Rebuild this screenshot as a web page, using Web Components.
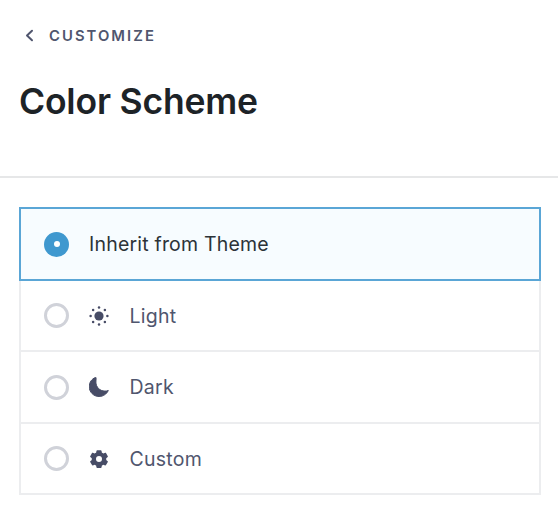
<!DOCTYPE html>
<html lang="en">
<head>
<meta charset="utf-8">
<title>Color Scheme</title>
<style>
  html, body { margin: 0; background: #fff; }
  body { font-family: Inter, "Liberation Sans", sans-serif; overflow: hidden; }
</style>
</head>
<body>
<scheme-panel>
  <back-link slot="back">Customize</back-link>
  <span slot="title">Color Scheme</span>
  <scheme-option selected>Inherit from Theme</scheme-option>
  <scheme-option icon="sun">Light</scheme-option>
  <scheme-option icon="moon">Dark</scheme-option>
  <scheme-option icon="gear">Custom</scheme-option>
</scheme-panel>

<script>
// panel: header, divider and the bordered list of options
class SchemePanel extends HTMLElement {
  constructor() {
    super();
    this.attachShadow({ mode: 'open' });
    this.shadowRoot.innerHTML = `
      <style>
        :host { display: block; }
        header { padding: 27px 19px 0; height: 178px; box-sizing: border-box; border-bottom: 2px solid #e6e7e8; }
        h1 { margin: 35.5px 0 0; font-size: 35.5px; line-height: 42px; font-weight: 600; letter-spacing: -0.2px; color: #1d2327; }
        .list { display: flex; flex-direction: column; margin: 31px 17px 0 19px; }
      </style>
      <header>
        <slot name="back"></slot>
        <h1><slot name="title"></slot></h1>
      </header>
      <div class="list"><slot></slot></div>`;
  }
}

class BackLink extends HTMLElement {
  constructor() {
    super();
    this.attachShadow({ mode: 'open' });
    this.shadowRoot.innerHTML = `
      <style>
        :host { display: flex; align-items: center; gap: 15px; padding-left: 6px; height: 18px; color: #50566e; }
        svg { width: 9px; height: 13px; flex: none; margin-top: -1px; }
        span { font-size: 14.8px; font-weight: 600; letter-spacing: 2.05px; text-transform: uppercase; line-height: 18px; }
      </style>
      <svg viewBox="0 0 9 13" fill="none" stroke="#50566e" stroke-width="2" stroke-linecap="round" stroke-linejoin="round"><path d="M7 1.8 2 6.5l5 4.7"/></svg>
      <span><slot></slot></span>`;
  }
}

const ICONS = {
  sun: `<circle cx="10" cy="10" r="4.6"/><g>
    <circle cx="10" cy="1.6" r="1.25"/><circle cx="10" cy="18.4" r="1.25"/>
    <circle cx="1.6" cy="10" r="1.25"/><circle cx="18.4" cy="10" r="1.25"/>
    <circle cx="4.1" cy="4.1" r="1.25"/><circle cx="15.9" cy="4.1" r="1.25"/>
    <circle cx="4.1" cy="15.9" r="1.25"/><circle cx="15.9" cy="15.9" r="1.25"/></g>`,
  moon: `<path stroke="#474c66" stroke-width="1" stroke-linejoin="round" d="M6.6 0.4C2.8 1.8 0.2 5.4 0.2 9.6c0 5.5 4.4 9.9 9.9 9.9 4 0 7.6-2.5 9.2-6-1 .4-2.2.6-3.4.6-5 0-9-4-9-9 0-1.8.5-3.3 0-4.7z"/>`,
  gear: `<path fill-rule="evenodd" d="M11.8 1.2c.3 0 .6.2.7.5l.4 2c.5.2 1 .5 1.4.8l1.9-.7c.3-.1.6 0 .8.3l1.8 3.1c.2.3.1.6-.1.8l-1.5 1.3c.1.5.1 1.1 0 1.6l1.5 1.3c.2.2.3.5.1.8l-1.8 3.1c-.2.3-.5.4-.8.3l-1.9-.7c-.4.3-.9.6-1.4.8l-.4 2c-.1.3-.4.5-.7.5H8.2c-.3 0-.6-.2-.7-.5l-.4-2c-.5-.2-1-.5-1.4-.8l-1.9.7c-.3.1-.6 0-.8-.3l-1.8-3.1c-.2-.3-.1-.6.1-.8l1.5-1.3c-.1-.5-.1-1.1 0-1.6L1.3 8c-.2-.2-.3-.5-.1-.8l1.8-3.1c.2-.3.5-.4.8-.3l1.9.7c.4-.3.9-.6 1.4-.8l.4-2c.1-.3.4-.5.7-.5h3.6zM10 7a3 3 0 1 0 0 6 3 3 0 0 0 0-6z"/>`
};

// one row: radio, optional icon, label
class SchemeOption extends HTMLElement {
  constructor() {
    super();
    this.attachShadow({ mode: 'open' });
    const icon = ICONS[this.getAttribute('icon')];
    this.shadowRoot.innerHTML = `
      <style>
        :host { display: flex; align-items: center; box-sizing: border-box; height: 73.5px; margin-top: -2px; padding: 1px 0 0 23px; border: 2px solid #ecedef; color: #50566e; font-size: 19.5px; }
        :host(:first-child) { margin-top: 0; height: 72px; }
        :host([selected]) { position: relative; border-color: #5aa6d6; background: #f7fcff; color: #2c3338; }
        .radio { display: flex; align-items: center; justify-content: center; width: 25px; height: 25px; box-sizing: border-box; border-radius: 50%; border: 3px solid #d0d2d9; flex: none; }
        :host([selected]) .radio { border: 0; background: #3f98cf; }
        :host([selected]) .radio::after { content: ""; width: 6px; height: 6px; border-radius: 50%; background: #fff; }
        svg { width: 20px; height: 20px; margin-left: 20px; fill: #474c66; flex: none; }
        .label { margin-left: 20.5px; line-height: 24px; letter-spacing: 0.25px; }
        .radio + .label { margin-left: 20px; letter-spacing: 0.2px; }
      </style>
      <span class="radio"></span>
      ${icon ? `<svg viewBox="0 0 20 20">${icon}</svg>` : ''}
      <span class="label"><slot></slot></span>`;
  }
}

customElements.define('scheme-panel', SchemePanel);
customElements.define('back-link', BackLink);
customElements.define('scheme-option', SchemeOption);
</script>
</body>
</html>
